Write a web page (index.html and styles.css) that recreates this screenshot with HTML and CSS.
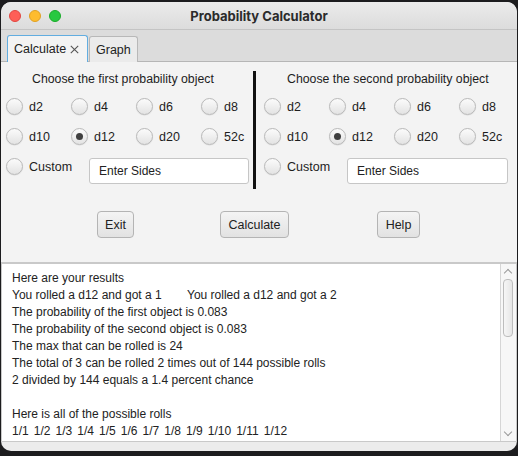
FILE: index.html
```html
<!DOCTYPE html>
<html>
<head>
<meta charset="utf-8">
<title>Probability Calculator</title>
<link rel="stylesheet" href="styles.css">
</head>
<body>
<div class="window">
  <div class="titlebar">
    <div class="lights">
      <span class="light red"></span>
      <span class="light yellow"></span>
      <span class="light green"></span>
    </div>
    <div class="title">Probability Calculator</div>
  </div>
  <div class="tabbar">
    <div class="tab active">Calculate<svg class="close" width="9" height="9" viewBox="0 0 9 9"><path d="M0.8 0.8 L8.2 8.2 M8.2 0.8 L0.8 8.2" stroke="#555" stroke-width="1.1" fill="none"/></svg></div>
    <div class="tab">Graph</div>
  </div>
  <div class="content">
    <div class="panels">
      <div class="panel left">
        <div class="heading">Choose the first probability object</div>
        <div class="grid">
          <label class="radio"><span class="dot"></span>d2</label>
          <label class="radio"><span class="dot"></span>d4</label>
          <label class="radio"><span class="dot"></span>d6</label>
          <label class="radio"><span class="dot"></span>d8</label>
          <label class="radio"><span class="dot"></span>d10</label>
          <label class="radio"><span class="dot checked"></span>d12</label>
          <label class="radio"><span class="dot"></span>d20</label>
          <label class="radio"><span class="dot"></span>52c</label>
        </div>
        <div class="custom-row">
          <label class="radio custom"><span class="dot"></span>Custom</label>
          <div class="field">Enter Sides</div>
        </div>
      </div>
      <div class="divider"></div>
      <div class="panel right">
        <div class="heading">Choose the second probability object</div>
        <div class="grid">
          <label class="radio"><span class="dot"></span>d2</label>
          <label class="radio"><span class="dot"></span>d4</label>
          <label class="radio"><span class="dot"></span>d6</label>
          <label class="radio"><span class="dot"></span>d8</label>
          <label class="radio"><span class="dot"></span>d10</label>
          <label class="radio"><span class="dot checked"></span>d12</label>
          <label class="radio"><span class="dot"></span>d20</label>
          <label class="radio"><span class="dot"></span>52c</label>
        </div>
        <div class="custom-row">
          <label class="radio custom"><span class="dot"></span>Custom</label>
          <div class="field">Enter Sides</div>
        </div>
      </div>
    </div>
    <div class="buttons">
      <div class="btn btn-exit">Exit</div>
      <div class="btn btn-calc">Calculate</div>
      <div class="btn btn-help">Help</div>
    </div>
  </div>
  <div class="results">
    <div class="text">
      <div class="line">Here are your results</div>
      <div class="line"><span class="first">You rolled a d12 and got a 1</span>You rolled a d12 and got a 2</div>
      <div class="line">The probability of the first object is 0.083</div>
      <div class="line">The probability of the second object is 0.083</div>
      <div class="line">The max that can be rolled is 24</div>
      <div class="line">The total of 3 can be rolled 2 times out of 144 possible rolls</div>
      <div class="line">2 divided by 144 equals a 1.4 percent chance</div>
      <div class="line">&nbsp;</div>
      <div class="line">Here is all of the possible rolls</div>
      <div class="line rolls">1/1  1/2  1/3  1/4  1/5  1/6  1/7  1/8  1/9  1/10  1/11  1/12</div>
      <div class="line rolls">2/1  2/2  2/3  2/4  2/5  2/6  2/7  2/8  2/9  2/10  2/11  2/12</div>
    </div>
    <div class="scrollbar">
      <span class="arrow up"></span>
      <span class="thumb"></span>
      <span class="arrow down"></span>
    </div>
  </div>
</div>
</body>
</html>
```
FILE: styles.css
```css
html, body {
  margin: 0;
  padding: 0;
}
body {
  width: 518px;
  height: 456px;
  overflow: hidden;
  background: #1c1c1e;
  font-family: "Liberation Sans", Arial, sans-serif;
  font-size: 12px;
  color: #1d1d1d;
}
.window {
  margin: 2px 1px 0 1px;
  width: 516px;
  height: 449px;
  border-radius: 10px;
  overflow: hidden;
  background: #ececec;
  display: flex;
  flex-direction: column;
}
.titlebar {
  height: 27px;
  flex: none;
  border-bottom: 1px solid #c4c4c4;
  background: linear-gradient(#ebebeb, #dcdcdc);
  display: flex;
  align-items: center;
  position: relative;
}
.lights {
  display: flex;
  gap: 8px;
  padding-left: 8px;
}
.light {
  width: 12px;
  height: 12px;
  border-radius: 50%;
  box-sizing: border-box;
}
.red { background: #fe5f57; border: 0.5px solid #e14640; }
.yellow { background: #febc2e; border: 0.5px solid #dfa023; }
.green { background: #28c840; border: 0.5px solid #1aab29; }
.title {
  position: absolute;
  left: 0;
  right: 0;
  text-align: center;
  font-family: "Inter", "Liberation Sans", sans-serif;
  font-weight: 700;
  font-size: 13px;
  color: #2b2b2b;
}
.tabbar {
  height: 32px;
  flex: none;
  box-sizing: border-box;
  background: #dcdcdc;
  border-bottom: 1px solid #b6b6b6;
  display: flex;
  align-items: flex-end;
  padding-left: 6px;
  gap: 1px;
}
.tab {
  height: 26px;
  box-sizing: border-box;
  padding: 0 6px;
  display: flex;
  align-items: center;
  border: 1px solid #b8b8b8;
  border-bottom: none;
  border-radius: 3px 3px 0 0;
  background: #ebebeb;
  margin-bottom: -1px;
  color: #222;
  font-size: 12.5px;
}
.tab.active {
  background: #f3f3f3;
  border-color: #62ade0;
  border-width: 1px 1px 0 1px;
  height: 27px;
  width: 81px;
  padding-left: 6px;
}
.close {
  margin-left: 4px;
  flex: none;
}
.content {
  height: 200px;
  flex: none;
  background: #f3f3f3;
  display: flex;
  flex-direction: column;
}
.panels {
  display: flex;
}
.panel {
  display: flex;
  flex-direction: column;
}
.panel.left {
  width: 252px;
  padding-left: 5px;
  box-sizing: border-box;
}
.panel.right {
  flex: 1;
  padding-left: 8px;
}
.heading {
  height: 17px;
  line-height: 17px;
  margin-top: 9px;
  font-size: 12.3px;
}
.left .heading { padding-left: 26px; }
.right .heading { padding-left: 23px; }
.grid {
  margin-top: 10px;
  display: grid;
  grid-template-columns: 65px 65px 65px 65px;
  row-gap: 13px;
}
.radio {
  display: flex;
  align-items: center;
  gap: 6px;
  height: 17px;
  font-size: 12.5px;
}
.dot {
  width: 17px;
  height: 17px;
  box-sizing: border-box;
  border-radius: 50%;
  border: 1px solid #b9b9b9;
  background: linear-gradient(#fbfbfb, #e3e3e3);
  box-shadow: 0 0.5px 1px rgba(0,0,0,0.12);
  display: flex;
  align-items: center;
  justify-content: center;
  flex: none;
}
.dot.checked::after {
  content: "";
  width: 7px;
  height: 7px;
  border-radius: 50%;
  background: #3f3f3f;
}
.custom-row {
  margin-top: 13px;
  display: flex;
  align-items: flex-start;
}
.radio.custom {
  width: 83px;
}
.field {
  width: 160px;
  height: 26px;
  box-sizing: border-box;
  border: 1px solid #c6c6c6;
  border-radius: 3px;
  background: #fff;
  padding-left: 9px;
  display: flex;
  align-items: center;
  font-size: 12px;
  color: #222;
}
.right .field { width: 161px; }
.divider {
  width: 3px;
  height: 118px;
  margin-top: 9px;
  background: #111;
  flex: none;
}
.buttons {
  display: flex;
  margin-top: 22px;
  padding-left: 96px;
}
.btn {
  height: 27px;
  box-sizing: border-box;
  border: 1px solid #b4b4b4;
  border-radius: 4px;
  background: linear-gradient(#f4f4f4, #e2e2e2);
  display: flex;
  align-items: center;
  justify-content: center;
  font-size: 12.5px;
  color: #222;
}
.btn-exit { width: 37px; }
.btn-calc { width: 69px; margin-left: 86px; }
.btn-help { width: 43px; margin-left: 88px; }
.results {
  height: 180px;
  flex: none;
  box-sizing: border-box;
  border-top: 2px solid #c9c9c9;
  border-left: 1px solid #c9c9c9;
  border-right: 1px solid #c9c9c9;
  border-bottom: 1px solid #c9c9c9;
  background: #fff;
  display: flex;
  overflow: hidden;
}
.text {
  flex: 1;
  padding: 6px 0 0 10px;
  overflow: hidden;
  font-size: 12px;
  color: #222;
}
.line {
  height: 17px;
  line-height: 17px;
  white-space: pre;
}
.rolls {
  word-spacing: -0.8px;
}
.first {
  display: inline-block;
  width: 175px;
}
.scrollbar {
  width: 15px;
  flex: none;
  background: #f7f7f7;
  border-left: 1px solid #d6d6d6;
  position: relative;
}
.thumb {
  position: absolute;
  left: 2px;
  top: 15px;
  width: 10px;
  height: 58px;
  box-sizing: border-box;
  border: 1px solid #bdbdbd;
  border-radius: 4px;
  background: linear-gradient(90deg, #f6f6f6, #e6e6e6);
}
.arrow {
  position: absolute;
  left: 4px;
  width: 5px;
  height: 5px;
  border-left: 1px solid #9a9a9a;
  border-top: 1px solid #9a9a9a;
}
.arrow.up {
  top: 6px;
  transform: rotate(45deg);
}
.arrow.down {
  bottom: 6px;
  transform: rotate(225deg);
}
```
